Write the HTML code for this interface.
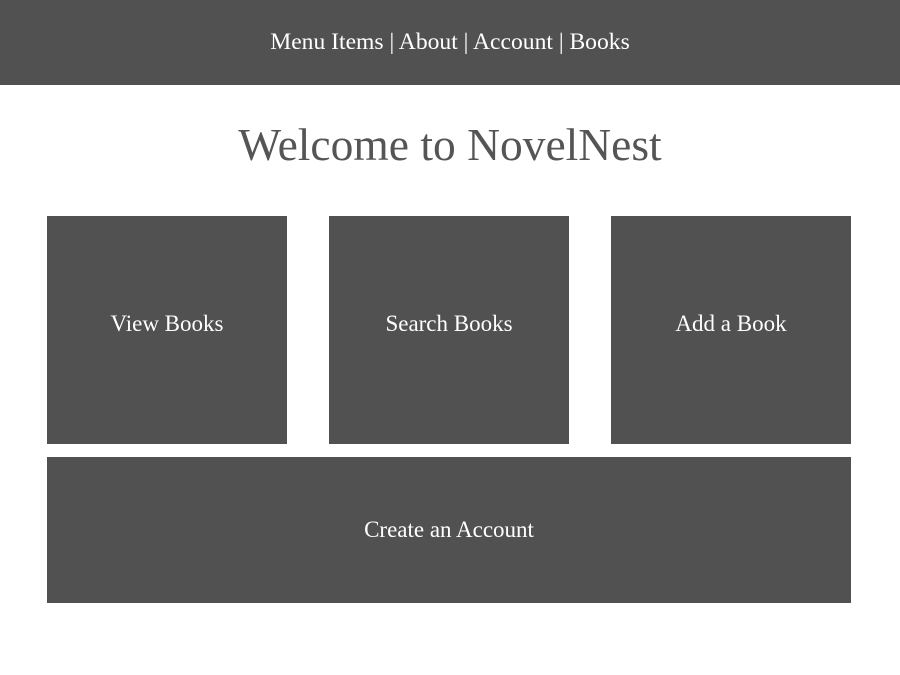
<!DOCTYPE html>
<html><head><meta charset="utf-8"><style>
body{margin:0;width:900px;height:675px;background:#fff;font-family:"Liberation Serif",serif;position:relative;overflow:hidden}
.hdr{position:absolute;left:0;top:0;width:900px;height:85px;background:#515151;color:#fff;font-size:23.6px;text-align:center;line-height:84px}
h1{position:absolute;top:118px;left:0;width:900px;margin:0;text-align:center;font-weight:normal;font-size:45.5px;color:#555;line-height:54px}
.b{position:absolute;background:#515151;color:#fff;font-size:23px;display:flex;align-items:center;justify-content:center;box-sizing:border-box}
.t{padding-bottom:12px}
</style></head><body>
<div class="hdr">Menu Items | About | Account | Books</div>
<h1>Welcome to NovelNest</h1>
<div class="b t" style="left:47px;top:216px;width:240px;height:228px">View Books</div>
<div class="b t" style="left:329px;top:216px;width:240px;height:228px">Search Books</div>
<div class="b t" style="left:611px;top:216px;width:240px;height:228px">Add a Book</div>
<div class="b" style="left:47px;top:457px;width:804px;height:146px">Create an Account</div>
</body></html>
